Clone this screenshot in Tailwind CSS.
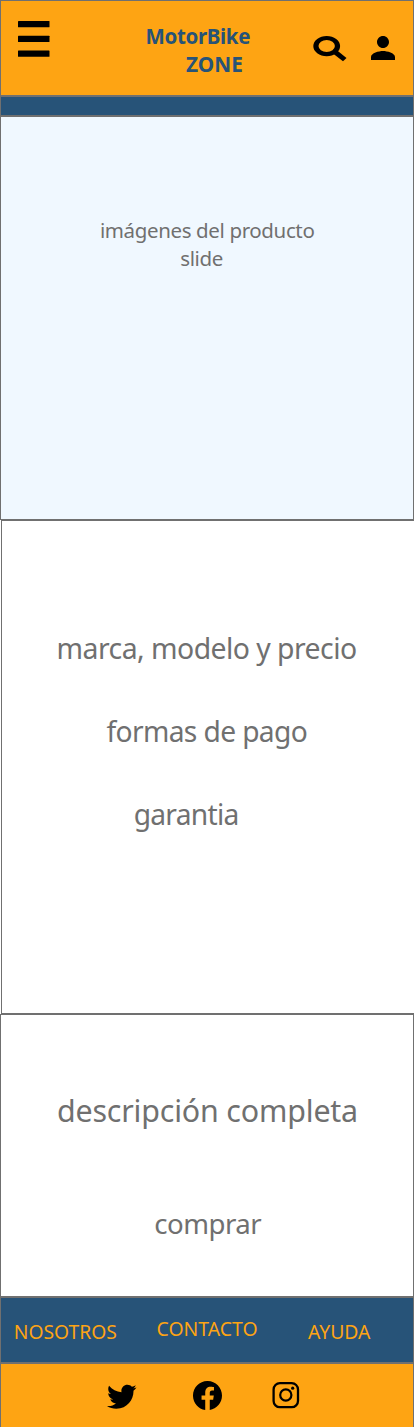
<!DOCTYPE html>
<html lang="es">
<head>
<meta charset="utf-8">
<title>MotorBike ZONE</title>
<script src="https://cdn.jsdelivr.net/npm/@tailwindcss/browser@4"></script>
</head>
<body class="w-[414px] h-[1427px] overflow-hidden bg-white font-['Noto_Sans',sans-serif] text-[#707070] whitespace-nowrap flex flex-col">
  <header class="h-24 shrink-0 bg-[#fea413] border border-[#707070] flex items-start">
    <button class="w-8 h-9 ml-[17px] mt-5" aria-label="Menú">
      <svg class="block" width="32" height="36" viewBox="0 0 32 36"><rect width="31.5" height="6.3" rx="0.6"/><rect y="14.7" width="31.5" height="6.3" rx="0.6"/><rect y="29.5" width="31.5" height="6.3" rx="0.6"/></svg>
    </button>
    <h1 class="w-[130px] ml-[95px] mt-[21px] font-bold text-[#275378] leading-7">
      <span class="block text-[20.5px] tracking-[-0.018em] pl-[0.6px]">MotorBike</span>
      <span class="block text-[20.8px] pl-[41px]">ZONE</span>
    </h1>
    <svg class="ml-[38px] mt-[35px] shrink-0" width="34" height="26" viewBox="0 0 34 26"><path fill-rule="evenodd" d="M13.7 0a13.4 10.1 0 1 0 0 20.2a13.4 10.1 0 1 0 0-20.2zM13.7 4.1a8.2 5.9 0 1 1 0 11.8a8.2 5.9 0 1 1 0-11.8z"/><path d="M24.2 14.4L33.5 22L30 25.2L20.6 18Z"/></svg>
    <svg class="ml-[18px] mt-[29px] shrink-0" width="36" height="36" viewBox="0 0 24 24"><path d="M12 12c2.21 0 4-1.79 4-4s-1.79-4-4-4-4 1.79-4 4 1.79 4 4 4zm0 2c-2.67 0-8 1.34-8 4v2h16v-2c0-2.66-5.33-4-8-4z"/></svg>
  </header>
  <div class="h-5 shrink-0 bg-[#275378] border border-[#707070]"></div>
  <section class="h-[404px] shrink-0 bg-[#f0f8ff] border border-[#707070] pt-[99px] leading-7">
    <p class="pl-[98.9px] text-[20.5px] tracking-[-0.018em]">imágenes del producto</p>
    <p class="pl-[179.3px] text-[20.5px] tracking-[-0.02em]">slide</p>
  </section>
  <section class="h-[494px] ml-px shrink-0 bg-white border-y border-l border-[#707070] pt-[109px] leading-9 flex flex-col gap-[47px]">
    <p class="pl-[54.6px] text-[28.4px] tracking-[-0.019em]">marca, modelo y precio</p>
    <p class="pl-[104.4px] text-[28.2px] tracking-[-0.022em]">formas de pago</p>
    <p class="pl-[131.7px] text-[28.2px] tracking-[-0.026em]">garantia</p>
  </section>
  <section class="h-[283px] shrink-0 bg-white border border-[#707070] pt-[78px] leading-9 flex flex-col gap-[76px]">
    <p class="pl-[56px] text-[30.4px] tracking-[-0.006em]">descripción completa</p>
    <p class="pl-[153.2px] text-[27.6px] tracking-[-0.018em]">comprar</p>
  </section>
  <nav class="h-[66px] shrink-0 bg-[#275378] border border-[#707070] text-[#fea413] leading-7 flex items-start">
    <a class="w-[143px] pl-[12.8px] pt-5 text-[19.3px]">NOSOTROS</a>
    <a class="w-[151px] pl-[12.6px] pt-[17px] text-[19.4px]">CONTACTO</a>
    <a class="pl-[13px] pt-5 text-[19.37px]">AYUDA</a>
  </nav>
  <footer class="h-[65px] shrink-0 bg-[#fea413] border border-[#707070] flex items-start">
    <svg class="ml-[106.2px] mt-[17.8px] shrink-0" width="29.5" height="29.5" viewBox="0 0 512 512"><path d="M459.37 151.716c.325 4.548.325 9.097.325 13.645 0 138.72-105.583 298.558-298.558 298.558-59.452 0-114.68-17.219-161.137-47.106 8.447.974 16.568 1.299 25.34 1.299 49.055 0 94.213-16.568 130.274-44.832-46.132-.975-84.792-31.188-98.112-72.772 6.498.974 12.995 1.624 19.818 1.624 9.421 0 18.843-1.3 27.614-3.573-48.081-9.747-84.143-51.98-84.143-102.985v-1.299c13.969 7.797 30.214 12.67 47.431 13.319-28.264-18.843-46.781-51.005-46.781-87.391 0-19.492 5.197-37.36 14.294-52.954 51.655 63.675 129.3 105.258 216.365 109.807-1.624-7.797-2.599-15.918-2.599-24.04 0-57.828 46.782-104.934 104.934-104.934 30.213 0 57.502 12.67 76.67 33.137 23.715-4.548 46.456-13.32 66.599-25.34-7.798 24.366-24.366 44.833-46.132 57.827 21.117-2.273 41.584-8.122 60.426-16.243-14.292 20.791-32.161 39.308-52.628 54.253z"/></svg>
    <svg class="ml-[56.3px] mt-[16.6px] shrink-0" width="29" height="29" viewBox="0 0 16 16"><path d="M16 8.049c0-4.446-3.582-8.05-8-8.05C3.58 0-.002 3.603-.002 8.05c0 4.017 2.926 7.347 6.75 7.951v-5.625h-2.03V8.05H6.75V6.275c0-2.017 1.195-3.131 3.022-3.131.876 0 1.791.157 1.791.157v1.98h-1.009c-.993 0-1.303.621-1.303 1.258v1.51h2.218l-.354 2.326H9.25V16c3.824-.604 6.75-3.934 6.75-7.951z"/></svg>
    <svg class="ml-[50px] mt-[18px] shrink-0" width="28" height="28" viewBox="0 0 28 28"><rect x="1.6" y="1.2" width="24.4" height="24" rx="6.3" fill="none" stroke="#000" stroke-width="2.3"/><circle cx="13.8" cy="13" r="5.6" fill="none" stroke="#000" stroke-width="2.2"/><circle cx="20.7" cy="6.2" r="1.6"/></svg>
  </footer>
</body>
</html>
